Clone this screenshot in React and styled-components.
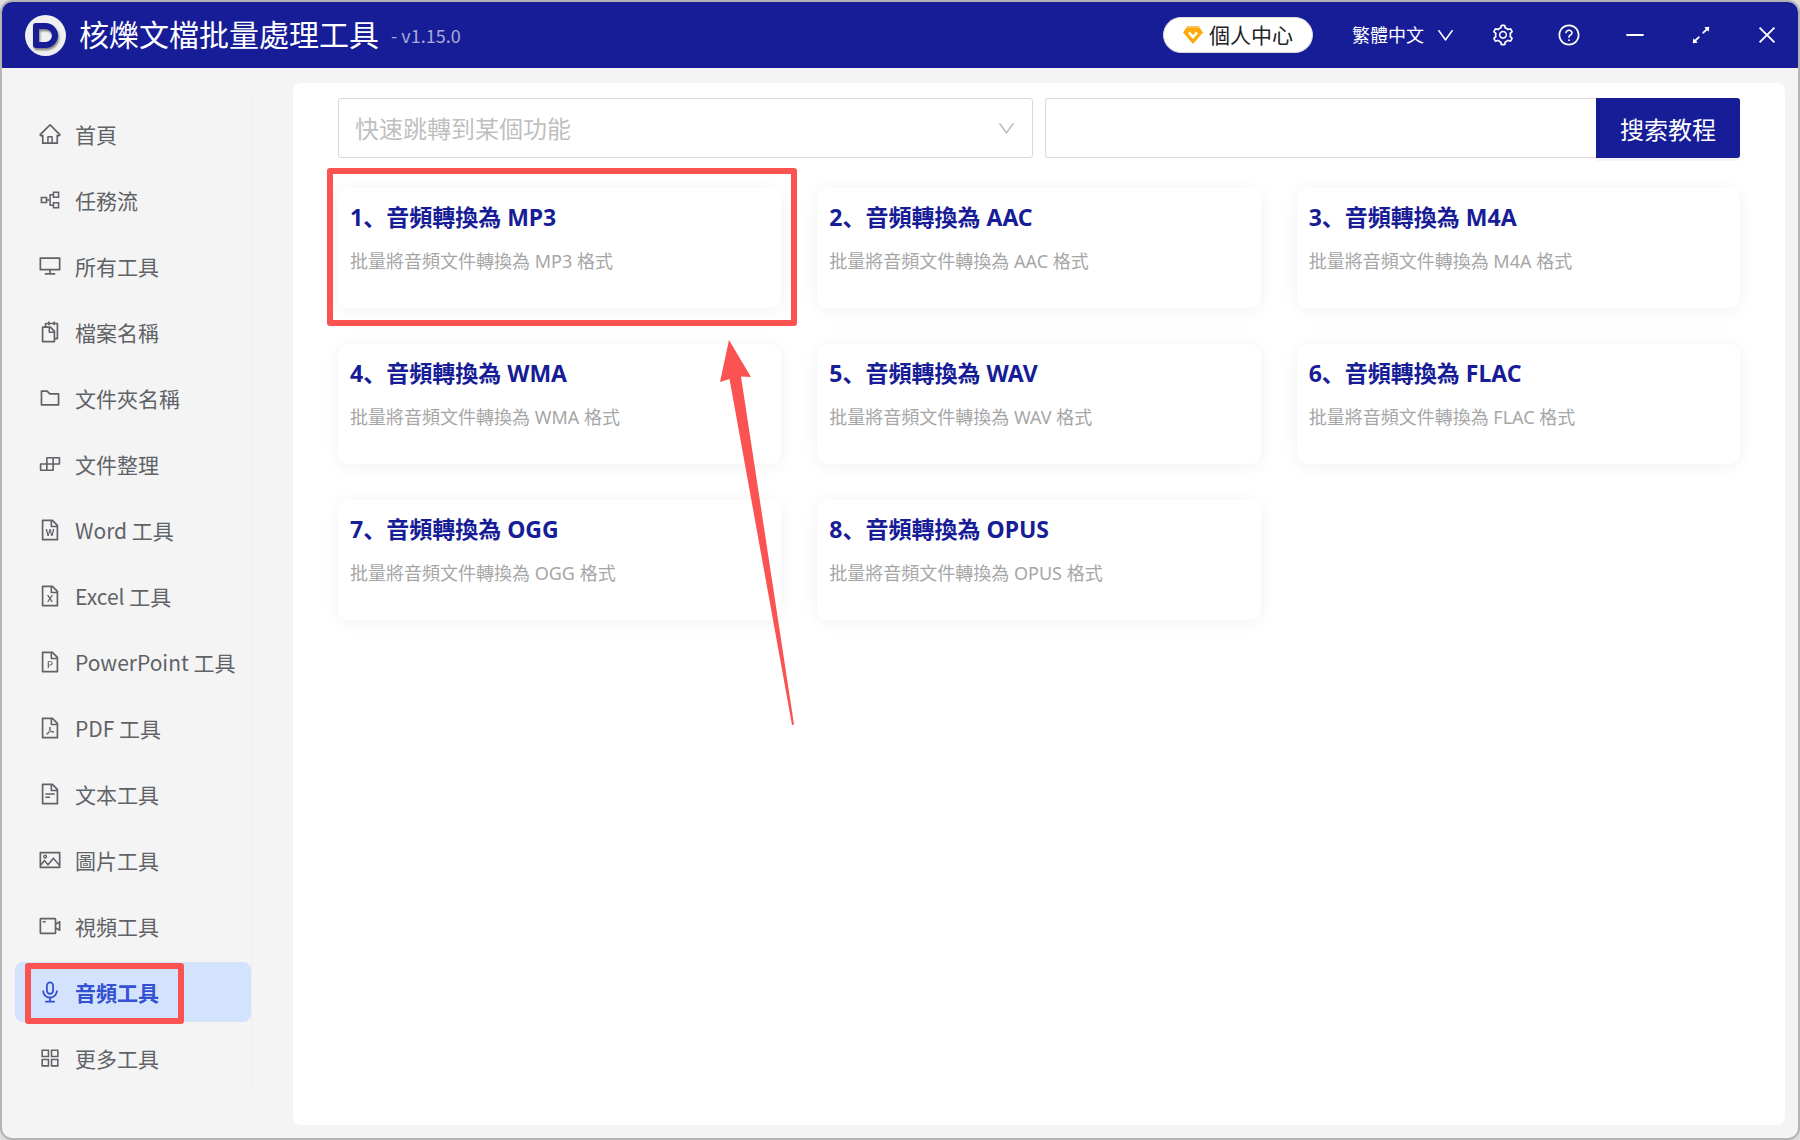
import React from "react";
import styled, { createGlobalStyle, css } from "styled-components";
import {
  AiOutlineAppstore,
  AiOutlineArrowsAlt,
  AiOutlineAudio,
  AiOutlineBuild,
  AiOutlineClose,
  AiOutlineDesktop,
  AiOutlineDown,
  AiOutlineFileExcel,
  AiOutlineFilePdf,
  AiOutlineFilePpt,
  AiOutlineFileText,
  AiOutlineFileWord,
  AiOutlineFolder,
  AiOutlineHome,
  AiOutlineMinus,
  AiOutlinePartition,
  AiOutlinePicture,
  AiOutlineQuestionCircle,
  AiOutlineSetting,
  AiOutlineSnippets,
  AiOutlineVideoCamera,
} from "react-icons/ai";

const navy = "#171c97";
const red = "#fb5252";

const GlobalStyle = createGlobalStyle`
  * {
    box-sizing: border-box;
  }

  body {
    margin: 0;
    background: #dedede;
    font-family: "Noto Sans", "Noto Sans CJK SC", sans-serif;
  }

  button,
  input,
  select {
    font-family: inherit;
  }
`;

const Window = styled.div`
  display: flex;
  flex-direction: column;
  min-height: 100vh;
  border: 2px solid #b4b4b4;
  border-radius: 12px;
  background: #f4f4f4;
  overflow: hidden;
`;

const Header = styled.header`
  display: flex;
  align-items: center;
  height: 66px;
  padding-left: 23px;
  background: ${navy};
  color: #ffffff;
`;

const Logo = styled.span`
  display: flex;
  align-items: center;
  justify-content: center;
  width: 41px;
  height: 41px;
  border-radius: 50%;
  background: #f0f0f0;
`;

const LogoMark = styled.span`
  width: 25px;
  height: 25px;
  border: 6px solid ${navy};
  border-radius: 3px 13px 13px 3px;
  filter: drop-shadow(1px 2px 1px rgba(0, 0, 0, 0.5));
`;

const AppTitle = styled.h1`
  margin: 0 0 0 13px;
  font-size: 30px;
  font-weight: 400;
  line-height: 40px;
`;

const Version = styled.span`
  margin-left: 12px;
  font-family: "Noto Sans CJK SC", sans-serif;
  font-size: 18px;
  line-height: 24px;
  color: #a9abd8;
`;

const HeaderActions = styled.div`
  display: flex;
  align-items: center;
  margin-left: auto;
`;

const AccountButton = styled.button`
  display: flex;
  align-items: center;
  gap: 6px;
  height: 36px;
  margin-right: 39px;
  padding: 0 19px;
  border: 1px solid #d9d9d9;
  border-radius: 18px;
  background: #ffffff;
  color: #222222;
  font-size: 21px;
  line-height: 30px;
`;

const SelectBox = styled.label`
  display: grid;
  align-items: center;

  & > * {
    grid-area: 1 / 1;
  }

  & > svg {
    justify-self: end;
    pointer-events: none;
  }
`;

const LanguageBox = styled(SelectBox)`
  width: 104px;
  margin-right: 16px;
`;

const LanguageSelect = styled.select`
  appearance: none;
  width: 100%;
  padding: 0;
  border: 0;
  background: transparent;
  color: #ffffff;
  font-size: 18px;
  line-height: 28px;
`;

const WindowButtons = styled.div`
  display: flex;
  gap: 4px;
`;

const WindowButton = styled.button`
  display: flex;
  align-items: center;
  justify-content: center;
  width: 62px;
  height: 66px;
  padding: 0;
  border: 0;
  background: transparent;
  color: #ffffff;
`;

const Body = styled.div`
  display: flex;
  flex: 1;
  padding: 15px 13px 13px 0;
`;

const Sidebar = styled.nav`
  flex: none;
  display: flex;
  flex-direction: column;
  align-self: flex-start;
  gap: 6px;
  width: 250px;
  margin: 15px 41px 0 0;
  padding: 6px 0 3px 13px;
  border-right: 1px solid #ececec;
  font-family: "Noto Sans CJK SC", sans-serif;
`;

const NavItem = styled.a`
  position: relative;
  display: flex;
  align-items: center;
  gap: 13px;
  height: 60px;
  padding-left: 23px;
  border-radius: 8px;
  color: #5f6368;
  font-size: 21px;
  line-height: 30px;
  text-decoration: none;

  ${({ $active }) =>
    $active &&
    css`
      background: #d3e3fd;
      color: #3450d2;
      font-weight: 700;
    `}
`;

const Panel = styled.main`
  flex: 1;
  min-width: 0;
  padding: 15px 45px;
  border-radius: 8px;
  background: #ffffff;
`;

const Toolbar = styled.div`
  display: grid;
  grid-template-columns: 1fr 1fr;
  gap: 12px;
  margin-bottom: 30px;
`;

const JumpBox = styled(SelectBox)`
  & > svg {
    margin-right: 16px;
    color: #bfbfbf;
  }
`;

const JumpSelect = styled.select`
  appearance: none;
  width: 100%;
  height: 60px;
  padding: 0 48px 0 16px;
  border: 1px solid #d9d9d9;
  border-radius: 3px;
  background: #ffffff;
  color: #bfbfbf;
  font-size: 24px;
`;

const SearchForm = styled.form`
  display: flex;
`;

const SearchInput = styled.input`
  flex: 1;
  min-width: 0;
  height: 60px;
  padding: 0 16px;
  border: 1px solid #d9d9d9;
  border-right: 0;
  border-radius: 3px 0 0 3px;
  font-size: 24px;
`;

const SearchButton = styled.button`
  height: 60px;
  padding: 0 24px;
  border: 0;
  border-radius: 0 3px 3px 0;
  background: ${navy};
  box-shadow: 0 3px 0 rgba(0, 0, 0, 0.04);
  color: #ffffff;
  font-size: 24px;
`;

const CardGrid = styled.div`
  display: grid;
  grid-template-columns: repeat(3, 1fr);
  gap: 36px;
`;

const Card = styled.article`
  position: relative;
  z-index: ${({ $raised }) => ($raised ? 1 : 0)};
  min-height: 120px;
  padding: 11px 12px;
  border-radius: 12px;
  background: #ffffff;
  box-shadow: 0 2px 18px rgba(0, 0, 0, 0.06);
`;

const CardTitle = styled.h2`
  margin: 0;
  color: ${navy};
  font-size: 23px;
  font-weight: 700;
  line-height: 36px;
`;

const CardText = styled.p`
  margin: 12px 0 0;
  color: #a6a6a6;
  font-size: 18px;
  line-height: 28px;
`;

// red marks drawn over the interface
const Mark = styled.span`
  position: absolute;
  border: 6px solid ${red};
  border-radius: 3px;
  pointer-events: none;
`;

const CardMark = styled(Mark)`
  top: -20px;
  right: -16px;
  bottom: -18px;
  left: -11px;
`;

const NavMark = styled(Mark)`
  top: 1px;
  left: 10px;
  width: 159px;
  height: 61px;
`;

const Arrow = styled.svg`
  position: absolute;
  top: 152px;
  right: -14px;
  pointer-events: none;
`;

const Diamond = () => (
  <svg width="20" height="20" viewBox="0 0 20 20" aria-hidden="true">
    <path d="M4.5 1h11L20 7.5 10 19 0 7.5z" fill="#fcab0b" />
    <path d="M4.5 1h11l1.2 2H3.3z" fill="#f9c25c" />
    <path
      d="M6 7.5l4 4.5 4-4.5"
      fill="none"
      stroke="#ffffff"
      strokeWidth="2.6"
    />
  </svg>
);

const menu = [
  { label: "首頁", icon: AiOutlineHome },
  { label: "任務流", icon: AiOutlinePartition },
  { label: "所有工具", icon: AiOutlineDesktop },
  { label: "檔案名稱", icon: AiOutlineSnippets },
  { label: "文件夾名稱", icon: AiOutlineFolder },
  { label: "文件整理", icon: AiOutlineBuild },
  { label: "Word 工具", icon: AiOutlineFileWord },
  { label: "Excel 工具", icon: AiOutlineFileExcel },
  { label: "PowerPoint 工具", icon: AiOutlineFilePpt },
  { label: "PDF 工具", icon: AiOutlineFilePdf },
  { label: "文本工具", icon: AiOutlineFileText },
  { label: "圖片工具", icon: AiOutlinePicture },
  { label: "視頻工具", icon: AiOutlineVideoCamera },
  { label: "音頻工具", icon: AiOutlineAudio, active: true },
  { label: "更多工具", icon: AiOutlineAppstore },
];

const formats = ["MP3", "AAC", "M4A", "WMA", "WAV", "FLAC", "OGG", "OPUS"];

const windowButtons = [
  { label: "設置", icon: AiOutlineSetting },
  { label: "幫助", icon: AiOutlineQuestionCircle },
  { label: "最小化", icon: AiOutlineMinus },
  { label: "最大化", icon: AiOutlineArrowsAlt },
  { label: "關閉", icon: AiOutlineClose },
];

const TitleBar = () => (
  <Header>
    <Logo>
      <LogoMark />
    </Logo>
    <AppTitle>核爍文檔批量處理工具</AppTitle>
    <Version>- v1.15.0</Version>
    <HeaderActions>
      <AccountButton type="button">
        <Diamond />
        個人中心
      </AccountButton>
      <LanguageBox>
        <LanguageSelect aria-label="語言">
          <option>繁體中文</option>
        </LanguageSelect>
        <AiOutlineDown size={21} />
      </LanguageBox>
      <WindowButtons>
        {windowButtons.map(({ label, icon: Icon }) => (
          <WindowButton key={label} type="button" aria-label={label}>
            <Icon size={24} />
          </WindowButton>
        ))}
      </WindowButtons>
    </HeaderActions>
  </Header>
);

const Menu = () => (
  <Sidebar>
    {menu.map(({ label, icon: Icon, active }) => (
      <NavItem key={label} href="#" $active={active}>
        <Icon size={24} />
        {label}
        {active && <NavMark />}
      </NavItem>
    ))}
  </Sidebar>
);

const FormatCard = ({ index, format, marked }) => (
  <Card $raised={marked}>
    <CardTitle>
      {index}、音頻轉換為 {format}
    </CardTitle>
    <CardText>批量將音頻文件轉換為 {format} 格式</CardText>
    {marked && (
      <>
        <CardMark />
        <Arrow width="75" height="386" viewBox="0 0 75 386">
          <path
            d="M9 0L31 37 21 36.5 74 384.5 72 385 9.5 39 0 42z"
            fill={red}
          />
        </Arrow>
      </>
    )}
  </Card>
);

export default function App() {
  return (
    <>
      <GlobalStyle />
      <Window>
        <TitleBar />
        <Body>
          <Menu />
          <Panel>
            <Toolbar>
              <JumpBox>
                <JumpSelect aria-label="快速跳轉到某個功能">
                  <option>快速跳轉到某個功能</option>
                </JumpSelect>
                <AiOutlineDown size={21} />
              </JumpBox>
              <SearchForm>
                <SearchInput type="text" aria-label="搜索教程" />
                <SearchButton type="button">搜索教程</SearchButton>
              </SearchForm>
            </Toolbar>
            <CardGrid>
              {formats.map((format, i) => (
                <FormatCard
                  key={format}
                  index={i + 1}
                  format={format}
                  marked={i === 0}
                />
              ))}
            </CardGrid>
          </Panel>
        </Body>
      </Window>
    </>
  );
}
